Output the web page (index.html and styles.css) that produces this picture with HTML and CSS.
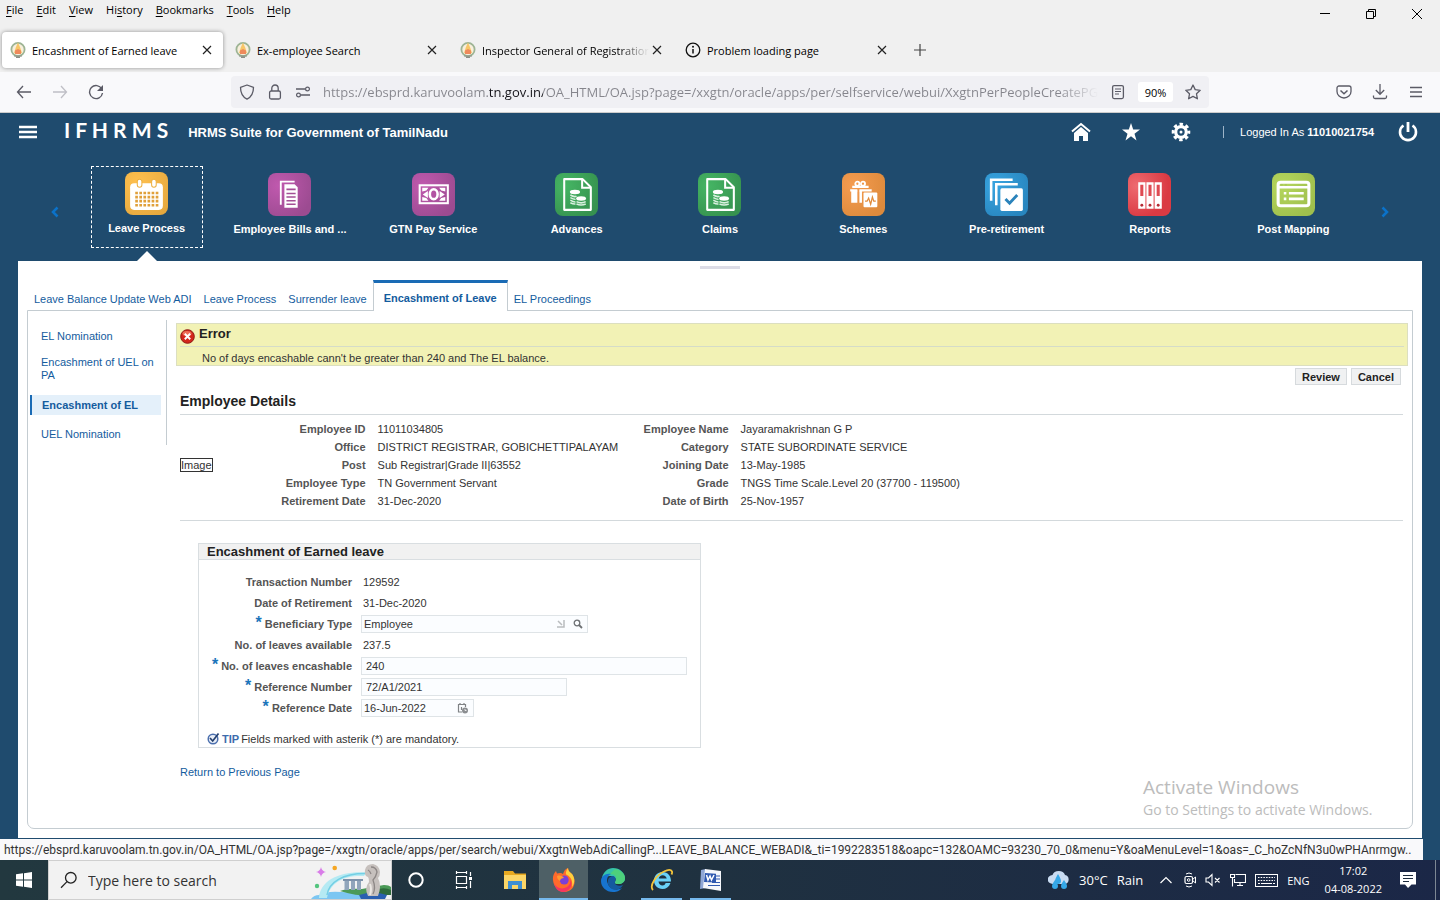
FILE: index.html
```html
<!DOCTYPE html>
<html lang="en">

<head>
    <meta charset="UTF-8">
    <meta name="viewport" content="width=device-width, initial-scale=1.0">
    <title>Encashment of Earned leave</title>
    <link rel="stylesheet" href="styles.css">
</head>

<body>

    <!-- shared symbols -->
    <svg class="defs" width="0" height="0">
        <symbol id="emblem" viewBox="0 0 16 16">
            <circle cx="8" cy="7.500" r="6.600" fill="#f8efdc" stroke="#9db494" stroke-width="1.800"/>
            <path d="M8 .5l2.200 5L12 11H4l1.800-5.500z" fill="#f7c667"/>
            <path d="M5 8.500l3-1.500 3 1.500V12H5z" fill="#ee8a5c"/>
            <path d="M4 14h8M6 15.300h4" stroke="#8b8f86" stroke-width="1.200"/>
        </symbol>
        <symbol id="close" viewBox="0 0 10 10">
            <path d="M1 1l8 8M9 1L1 9" stroke="#222" stroke-width="1.200" fill="none"/>
        </symbol>
        <symbol id="coinfile" viewBox="0 0 42 42">
            <path d="M9 6h18l8 8v22H9z" fill="none" stroke="#fff" stroke-width="2" stroke-linejoin="round"/>
            <path d="M26.500 6v8.500H35" fill="none" stroke="#fff" stroke-width="2"/>
            <ellipse cx="19.500" cy="18.500" rx="5" ry="2.200" fill="#fff"/>
            <path d="M15 21.500q4 2.500 6 1M15 24q4 2 5 1.500M15 26.500q3 2 5 1.800M15 29q3 1.500 5 1.200" stroke="#d9f0df" stroke-width="1.500" fill="none"/>
            <ellipse cx="25.500" cy="24.800" rx="4.800" ry="2.200" fill="#fff"/>
            <path d="M21 28q4.500 2.400 9 0M21 30.300q4.500 2 9 0" stroke="#d9f0df" stroke-width="1.500" fill="none"/>
        </symbol>
    </svg>

    <header class="browser">
        <div class="menubar">
            <nav class="menus">
                <button><u>F</u>ile</button>
                <button><u>E</u>dit</button>
                <button><u>V</u>iew</button>
                <button>Hi<u>s</u>tory</button>
                <button><u>B</u>ookmarks</button>
                <button><u>T</u>ools</button>
                <button><u>H</u>elp</button>
            </nav>
            <div class="window-buttons">
                <button aria-label="Minimize"><svg width="12" height="12" viewBox="0 0 12 12"><path d="M1 5.500h10" stroke="#000"/></svg></button>
                <button aria-label="Restore"><svg width="12" height="12" viewBox="0 0 12 12"><path d="M1.500 3.500h7v7h-7zM3.500 3V1.500h7v7H9" fill="none" stroke="#000"/></svg></button>
                <button aria-label="Close"><svg width="12" height="12" viewBox="0 0 12 12"><path d="M1 1l10 10M11 1L1 11" stroke="#000"/></svg></button>
            </div>
        </div>

        <div class="tabs">
            <div class="tab tab-active">
                <svg width="16" height="16"><use href="#emblem"/></svg>
                <span class="tab-title">Encashment of Earned leave</span>
                <button aria-label="Close tab"><svg width="10" height="10"><use href="#close"/></svg></button>
            </div>
            <div class="tab">
                <svg width="16" height="16"><use href="#emblem"/></svg>
                <span class="tab-title">Ex-employee Search</span>
                <button aria-label="Close tab"><svg width="10" height="10"><use href="#close"/></svg></button>
            </div>
            <div class="tab">
                <svg width="16" height="16"><use href="#emblem"/></svg>
                <span class="tab-title fade">Inspector General of Registration</span>
                <button aria-label="Close tab"><svg width="10" height="10"><use href="#close"/></svg></button>
            </div>
            <div class="tab">
                <svg width="16" height="16" viewBox="0 0 16 16"><circle cx="8" cy="8" r="6.800" fill="none" stroke="#111" stroke-width="1.300"/><path d="M8 7v4.500" stroke="#111" stroke-width="1.500"/><circle cx="8" cy="4.800" r="1" fill="#111"/></svg>
                <span class="tab-title">Problem loading page</span>
                <button aria-label="Close tab"><svg width="10" height="10"><use href="#close"/></svg></button>
            </div>
            <button class="new-tab" aria-label="New tab"><svg width="12" height="12" viewBox="0 0 12 12"><path d="M6 0v12M0 6h12" stroke="#444" stroke-width="1.200"/></svg></button>
        </div>

        <div class="toolbar">
            <button aria-label="Back"><svg width="16" height="16" viewBox="0 0 16 16"><path d="M15 8H1.500M7 2L1.500 8 7 14" fill="none" stroke="#5b5b66" stroke-width="1.300"/></svg></button>
            <button aria-label="Forward"><svg width="16" height="16" viewBox="0 0 16 16"><path d="M1 8h13.500M9 2l5.500 6L9 14" fill="none" stroke="#bfbfc6" stroke-width="1.300"/></svg></button>
            <button aria-label="Reload"><svg width="16" height="16" viewBox="0 0 16 16"><path d="M13.800 5A6.500 6.500 0 1 0 14.500 9" fill="none" stroke="#5b5b66" stroke-width="1.400"/><path d="M15 1v6H9z" fill="#5b5b66"/></svg></button>
            <div class="urlbar">
                <svg width="16" height="16" viewBox="0 0 16 16"><path d="M8 1l6.500 2.300C14.500 9 12.500 13 8 15.200 3.500 13 1.500 9 1.500 3.300z" fill="none" stroke="#5b5b66" stroke-width="1.300" stroke-linejoin="round"/></svg>
                <svg width="16" height="16" viewBox="0 0 16 16"><rect x="2.600" y="7" width="10.800" height="8" rx="1.500" fill="none" stroke="#5b5b66" stroke-width="1.300"/><path d="M4.800 7V4.200a3.200 3.200 0 0 1 6.400 0V7" fill="none" stroke="#5b5b66" stroke-width="1.300"/></svg>
                <svg width="16" height="16" viewBox="0 0 16 16"><path d="M1 5h9M6 11h9" stroke="#5b5b66" stroke-width="1.300"/><circle cx="12.500" cy="5" r="1.900" fill="none" stroke="#5b5b66" stroke-width="1.200"/><circle cx="3.500" cy="11" r="1.900" fill="none" stroke="#5b5b66" stroke-width="1.200"/></svg>
                <input class="url" type="text" aria-label="Address" value="https://ebsprd.karuvoolam.tn.gov.in/OA_HTML/OA.jsp?page=/xxgtn/oracle/apps/per/selfservice/webui/XxgtnPerPeopleCreatePG&amp;_ri=800">
                <button aria-label="Reader view"><svg width="16" height="16" viewBox="0 0 16 16"><rect x="2.600" y="1.600" width="10.800" height="13" rx="1.500" fill="none" stroke="#5b5b66" stroke-width="1.300"/><path d="M5 5h6M5 7.500h6M5 10h4" stroke="#5b5b66" stroke-width="1.200"/></svg></button>
                <button class="zoom">90%</button>
                <button aria-label="Bookmark"><svg width="16" height="16" viewBox="0 0 16 16"><path d="M8 1l2.200 4.600 5 .7-3.700 3.500.9 5L8 12.400l-4.400 2.400.9-5L.8 6.300l5-.7z" fill="none" stroke="#5b5b66" stroke-width="1.300" stroke-linejoin="round"/></svg></button>
            </div>
            <div class="toolbar-end">
                <button aria-label="Pocket"><svg width="16" height="16" viewBox="0 0 16 16"><path d="M3 2h10a2 2 0 0 1 2 2v3.500a7 6.500 0 0 1-14 0V4a2 2 0 0 1 2-2z" fill="none" stroke="#5b5b66" stroke-width="1.300"/><path d="M4.500 6.500L8 9.800l3.500-3.300" fill="none" stroke="#5b5b66" stroke-width="1.500"/></svg></button>
                <button aria-label="Downloads"><svg width="16" height="16" viewBox="0 0 16 16"><path d="M8 0v10M3.800 6L8 10.300 12.200 6M1.500 11.500V13a1.500 1.500 0 0 0 1.500 1.500h10a1.500 1.500 0 0 0 1.500-1.500v-1.500" fill="none" stroke="#5b5b66" stroke-width="1.300"/></svg></button>
                <button aria-label="Menu"><svg width="16" height="16" viewBox="0 0 16 16"><path d="M2 3.500h12M2 8h12M2 12.500h12" stroke="#5b5b66" stroke-width="1.300"/></svg></button>
            </div>
        </div>
    </header>

    <main class="page">
        <div class="app-header">
            <button aria-label="Navigator"><svg width="18" height="14" viewBox="0 0 18 14"><path d="M0 2h18M0 7h18M0 12h18" stroke="#fff" stroke-width="2.600"/></svg></button>
            <span class="logo">I F H R M S</span>
            <span class="suite">HRMS Suite for Government of TamilNadu</span>
            <div class="app-icons">
                <button aria-label="Home"><svg width="20" height="20" viewBox="0 0 20 20"><path d="M1 9.500L10 2l9 7.500" fill="none" stroke="#fff" stroke-width="2"/><path d="M3 11l7-6 7 6v8h-5v-5H8v5H3z" fill="#fff"/></svg></button>
                <button aria-label="Favorites"><svg width="20" height="20" viewBox="0 0 20 20"><path d="M10 1l2.200 6.500H19l-5.500 4.200 2 6.800L10 14.300l-5.500 4.200 2-6.800L1 7.500h6.800z" fill="#fff"/></svg></button>
                <button aria-label="Settings"><svg width="20" height="20" viewBox="0 0 20 20"><circle cx="10" cy="10" r="5.300" fill="none" stroke="#fff" stroke-width="3.200"/><circle cx="10" cy="10" r="7.800" fill="none" stroke="#fff" stroke-width="3" stroke-dasharray="3.400 2.726" stroke-dashoffset="1.700"/><circle cx="10" cy="10" r="1.500" fill="#fff"/></svg></button>
                <span class="divider"></span>
                <span class="user">Logged In As <b>11010021754</b></span>
                <button aria-label="Logout"><svg width="20" height="20" viewBox="0 0 20 20"><path d="M5.500 3.500a8 8 0 1 0 9 0" fill="none" stroke="#fff" stroke-width="2.600"/><path d="M10 0v10" stroke="#fff" stroke-width="2.800"/></svg></button>
            </div>
        </div>

        <nav class="springboard">
            <button class="arrow" aria-label="Previous"><svg width="8" height="12" viewBox="0 0 8 12"><path d="M6.500 1.500L2 6l4.500 4.500" fill="none" stroke="#0b72c9" stroke-width="2.500"/></svg></button>
            <ul class="tiles">
                <li class="tile tile-active"><a href="#">
                    <svg class="tile-icon orange" viewBox="0 0 42 42"><rect x="5" y="11" width="32" height="26" rx="4" fill="#fff"/><rect x="12" y="7" width="4.500" height="8" rx="2.200" fill="#fff" stroke="#edb041"/><rect x="26" y="7" width="4.500" height="8" rx="2.200" fill="#fff" stroke="#edb041"/><path d="M10 20.500h24M10 24.500h24M10 28.500h24M10 32.500h24" stroke="#e0a03a" stroke-width="2.600" stroke-dasharray="2.600 1.400"/></svg>
                    Leave Process</a></li>
                <li class="tile"><a href="#">
                    <svg class="tile-icon purple" viewBox="0 0 42 42"><path d="M12.500 31V8.500H26" fill="none" stroke="#fff" stroke-width="1.800"/><path d="M16 11h10l3 3v20H16z" fill="#fff"/><path d="M18 16h9M18 20h9M18 23.500h9M18 27h9M18 30.500h9" stroke="#a34f95" stroke-width="1.500"/></svg>
                    Employee Bills and ...</a></li>
                <li class="tile"><a href="#">
                    <svg class="tile-icon purple" viewBox="0 0 42 42"><rect x="7.500" y="12" width="27.500" height="17.500" fill="none" stroke="#fff" stroke-width="2"/><path d="M10 14.500h6l-2 2.500-4 1zM32.500 14.500h-6l2 2.500 4 1zM10 27h6l-2-2.500-4-1zM32.500 27h-6l2-2.500 4-1z" fill="#fff"/><path d="M10.500 21l5-3.500v7zM32 21l-5-3.500v7z" fill="#fff"/><ellipse cx="21.200" cy="20.700" rx="3.800" ry="4.800" fill="none" stroke="#fff" stroke-width="2.500"/></svg>
                    GTN Pay Service</a></li>
                <li class="tile"><a href="#">
                    <svg class="tile-icon green" viewBox="0 0 42 42"><use href="#coinfile"/></svg>
                    Advances</a></li>
                <li class="tile"><a href="#">
                    <svg class="tile-icon green" viewBox="0 0 42 42"><use href="#coinfile"/></svg>
                    Claims</a></li>
                <li class="tile"><a href="#">
                    <svg class="tile-icon amber" viewBox="0 0 42 42"><circle cx="15" cy="10.500" r="2" fill="none" stroke="#fff" stroke-width="1.800"/><circle cx="20.500" cy="10.500" r="2" fill="none" stroke="#fff" stroke-width="1.800"/><path d="M10 13.500h16M8 17h7M17 17h12" stroke="#fff" stroke-width="2.200"/><path d="M9 17h6v12H9zM17 17h2.500v12H17z" fill="#fff"/><rect x="21" y="19" width="13.500" height="14.500" rx="1" fill="#fff"/><path d="M22.500 27.500h2l1.500-3 2 6 1.700-7 1.300 4h2" fill="none" stroke="#e08a3a" stroke-width="1.200"/></svg>
                    Schemes</a></li>
                <li class="tile"><a href="#">
                    <svg class="tile-icon blue" viewBox="0 0 42 42"><path d="M6 27V6.500h21M11 31.500V11h21" fill="none" stroke="#fff" stroke-width="2.500"/><rect x="15" y="15" width="22" height="22" rx="1.500" fill="#fff"/><path d="M20 25.500l4 4 7.500-8" fill="none" stroke="#2a83bb" stroke-width="2.800"/></svg>
                    Pre-retirement</a></li>
                <li class="tile"><a href="#">
                    <svg class="tile-icon red" viewBox="0 0 42 42"><path d="M10 9h7v26h-7zM18 9h7v26h-7zM26 9h7v26h-7z" fill="#fff"/><path d="M12 11.500h3v11h-3zM20 11.500h3v11h-3zM28 11.500h3v11h-3z" fill="#df4a52"/><g fill="#b52c35"><circle cx="13.500" cy="31.500" r="1.400"/><circle cx="21.500" cy="31.500" r="1.400"/><circle cx="29.500" cy="31.500" r="1.400"/></g></svg>
                    Reports</a></li>
                <li class="tile"><a href="#">
                    <svg class="tile-icon lime" viewBox="0 0 42 42"><rect x="6" y="9" width="30" height="23" rx="2.500" fill="none" stroke="#fff" stroke-width="3"/><path d="M6 14h30" stroke="#fff" stroke-width="2.500"/><path d="M8.500 11.500h2M12.500 11.500h2" stroke="#a4c25a" stroke-width="1.200"/><path d="M11.500 19.800h2.500M11.500 25.300h2.500M16.500 19.800H31M16.500 25.300H31" stroke="#fff" stroke-width="2.600"/></svg>
                    Post Mapping</a></li>
            </ul>
            <button class="arrow" aria-label="Next"><svg width="8" height="12" viewBox="0 0 8 12"><path d="M1.500 1.500L6 6l-4.500 4.500" fill="none" stroke="#0b72c9" stroke-width="2.500"/></svg></button>
        </nav>

        <div class="sheet">
            <div class="handle"></div>
            <nav class="subtabs">
                <a href="#">Leave Balance Update Web ADI</a>
                <a href="#">Leave Process</a>
                <a href="#">Surrender leave</a>
                <a href="#" class="current">Encashment of Leave</a>
                <a href="#">EL Proceedings</a>
            </nav>

            <div class="content">
                <nav class="sidenav">
                    <a href="#">EL Nomination</a>
                    <a href="#">Encashment of UEL on PA</a>
                    <a href="#" class="current">Encashment of EL</a>
                    <a href="#">UEL Nomination</a>
                </nav>

                <div class="body">
                    <div class="error" role="alert">
                        <div class="error-title">
                            <svg width="15" height="15" viewBox="0 0 15 15"><circle cx="7.500" cy="7.500" r="6.800" fill="#d3261c" stroke="#8f1b14"/><ellipse cx="7" cy="4.500" rx="4.500" ry="2.500" fill="#ee6e58"/><path d="M4.800 4.800l5.400 5.400M10.200 4.800l-5.400 5.400" stroke="#fff" stroke-width="2"/></svg>
                            <span>Error</span>
                        </div>
                        <p>No of days encashable cann't be greater than 240 and The EL balance.</p>
                    </div>

                    <div class="actions">
                        <button>Review</button>
                        <button>Cancel</button>
                    </div>

                    <h2>Employee Details</h2>
                    <div class="employee">
                        <span class="photo">Image</span>
                        <dl class="left">
                            <dt>Employee ID</dt><dd>11011034805</dd>
                            <dt>Office</dt><dd>DISTRICT REGISTRAR, GOBICHETTIPALAYAM</dd>
                            <dt>Post</dt><dd>Sub Registrar|Grade II|63552</dd>
                            <dt>Employee Type</dt><dd>TN Government Servant</dd>
                            <dt>Retirement Date</dt><dd>31-Dec-2020</dd>
                        </dl>
                        <dl class="right">
                            <dt>Employee Name</dt><dd>Jayaramakrishnan G P</dd>
                            <dt>Category</dt><dd>STATE SUBORDINATE SERVICE</dd>
                            <dt>Joining Date</dt><dd>13-May-1985</dd>
                            <dt>Grade</dt><dd>TNGS Time Scale.Level 20 (37700 - 119500)</dd>
                            <dt>Date of Birth</dt><dd>25-Nov-1957</dd>
                        </dl>
                    </div>

                    <form class="panel">
                        <h3>Encashment of Earned leave</h3>
                        <div class="fields">
                            <span class="label">Transaction Number</span>
                            <span class="value">129592</span>

                            <span class="label">Date of Retirement</span>
                            <span class="value">31-Dec-2020</span>

                            <label for="beneficiary"><i>*</i> Beneficiary Type</label>
                            <div class="box lov">
                                <input type="text" id="beneficiary" value="Employee">
                                <svg width="8" height="8" viewBox="0 0 8 8"><path d="M1 1l4 4M7 0v7H0" fill="none" stroke="#b9bcbe" stroke-width="1.500"/></svg>
                                <button type="button" aria-label="Search"><svg width="10" height="10" viewBox="0 0 10 10"><circle cx="4" cy="4" r="2.800" fill="none" stroke="#6d7073" stroke-width="1.300"/><path d="M6 6l3 3" stroke="#6d7073" stroke-width="1.800"/></svg></button>
                            </div>

                            <span class="label">No. of leaves available</span>
                            <span class="value">237.5</span>

                            <label for="encashable"><i>*</i> No. of leaves encashable</label>
                            <input class="box wide" type="text" id="encashable" value="240">

                            <label for="refno"><i>*</i> Reference Number</label>
                            <input class="box medium" type="text" id="refno" value="72/A1/2021">

                            <label for="refdate"><i>*</i> Reference Date</label>
                            <div class="box date">
                                <input type="text" id="refdate" value="16-Jun-2022">
                                <button type="button" aria-label="Pick date"><svg width="12" height="12" viewBox="0 0 12 12"><path d="M5 10H1.500V2.500h7V5M3 1v2M7 1v2M4.500 5v3" fill="none" stroke="#808386" stroke-width="1.200"/><circle cx="8" cy="8.500" r="3" fill="#8b8e91"/><path d="M8 7v1.500h1.500" stroke="#fff" stroke-width=".8" fill="none"/></svg></button>
                            </div>
                        </div>
                        <p class="tip">
                            <svg width="13" height="13" viewBox="0 0 13 13"><circle cx="6" cy="7" r="4.800" fill="#e9eef7" stroke="#4b6fae" stroke-width="1.500"/><path d="M3 6l2.700 3L11.500 1.500" fill="none" stroke="#24406f" stroke-width="1.700"/></svg>
                            <b>TIP</b> Fields marked with asterik (*) are mandatory.
                        </p>
                    </form>

                    <a class="return" href="#">Return to Previous Page</a>
                </div>
            </div>
        </div>

        <div class="watermark">
            <p class="big">Activate Windows</p>
            <p>Go to Settings to activate Windows.</p>
        </div>
        <div class="status">https://ebsprd.karuvoolam.tn.gov.in/OA_HTML/OA.jsp?page=/xxgtn/oracle/apps/per/search/webui/XxgtnWebAdiCallingP...LEAVE_BALANCE_WEBADI&amp;_ti=1992283518&amp;oapc=132&amp;OAMC=93230_70_0&amp;menu=Y&amp;oaMenuLevel=1&amp;oas=_C_hoZcNfN3u0wPHAnrmgw..</div>
    </main>

    <footer class="taskbar">
        <button class="task" aria-label="Start"><svg width="16" height="16" viewBox="0 0 16 16"><path d="M0 2.300l7-1v6.200H0zM8 1.200L16 0v7.500H8zM0 8.500h7v6.200l-7-1zM8 8.500h8V16l-8-1.200z" fill="#fff"/></svg></button>
        <div class="search">
            <svg width="18" height="18" viewBox="0 0 18 18"><circle cx="10.800" cy="6.800" r="5.300" fill="none" stroke="#222" stroke-width="1.300"/><path d="M7 10.600L1 16.800" stroke="#222" stroke-width="1.300"/></svg>
            <input type="text" placeholder="Type here to search" aria-label="Type here to search">
            <!-- merlion and fountain -->
            <svg width="80" height="38" viewBox="0 0 80 38">
                <path d="M10 6q.8 4.200 5 5-4.200.8-5 5-.8-4.200-5-5 4.200-.8 5-5z" fill="#d97ce8"/>
                <circle cx="23.700" cy="7" r="2.300" fill="#f5a623"/>
                <circle cx="6" cy="25" r="2.200" fill="#53c57e"/>
                <path d="M0 38q3-4 8-4 7-4 22-3 12 0 20 4v3z" fill="#7cc6f2"/>
                <path d="M29 30q8-3 22-2 14-3 22-4 5 0 7 2v7q-26 5-51-3z" fill="#4b9a57"/>
                <path d="M62 30q10-5 18-1v5H62z" fill="#2f6b3c"/>
                <path d="M32 18h20v2H32z" fill="#7d92ab"/>
                <path d="M33.500 20h4.500v9h-4.500zM40 20h4v9h-4zM46 20h4v9h-4z" fill="#91a5bb"/>
                <path d="M8 37C9 20 28 10 55 11.500L53 15C32 14 19 22 16 37z" fill="#b5eaf3"/>
                <path d="M16 34C18 21 32 12.500 54 12.500" fill="none" stroke="#74cfe4" stroke-width="1.500"/>
                <path d="M48 34q14-5 28 0l-2 4H50z" fill="#2a5fb0"/>
                <path d="M54 9q1-6 8-6 6 1 7 8 0 4-2 6 4 8 0 18H57q-4-8 1-14 0-4-1-5-4-1-3-7z" fill="#c6c0bd"/>
                <path d="M60 6q5 0 6 5-1 5-4 8 3 8 0 14M57 9q2 1 3 4" fill="none" stroke="#8d8786" stroke-width="1.300"/>
                <path d="M59 23q2 5 0 11" fill="none" stroke="#ece8e4" stroke-width="2"/>
            </svg>
        </div>
        <button class="task" aria-label="Cortana"><svg width="18" height="18" viewBox="0 0 18 18"><circle cx="9" cy="9" r="6.700" fill="none" stroke="#fff" stroke-width="2"/></svg></button>
        <button class="task" aria-label="Task View"><svg width="18" height="18" viewBox="0 0 18 18"><path d="M1 1.500h11M1 16.500h11M1.500 5.500h10v7h-10zM1.500 0v3M11.500 0v3M1.500 15v3M11.500 15v3M15.500 1v4M15.500 10v7" fill="none" stroke="#fff" stroke-width="1.200"/><path d="M14 6h3v3h-3z" fill="#fff"/></svg></button>
        <div class="apps">
            <button aria-label="File Explorer"><svg width="24" height="24" viewBox="0 0 24 24"><path d="M1 3h9l2 2.500h11V21H1z" fill="#e8a920"/><path d="M1 7h22v14H1z" fill="#fcd667"/><path d="M5 21v-8h14v8h-4v-4H9v4z" fill="#3f8fd2"/></svg></button>
            <button class="open focused" aria-label="Firefox"><svg width="24" height="24" viewBox="0 0 24 24"><path d="M1 12C.5 8 2 5 4 3l1 2.500L8 5c1 0 2.500.5 3 1 1-3 2-5 5-6 0 3 2 4 4 6 5 6 3 18-8 18C6 24 1.500 18 1 12z" fill="#ff6a2b"/><path d="M16 0c0 3 2 4 4 6 3 4 3 9 0 13 1-6-1-10-5-12-2-1-1-4 1-7z" fill="#ffd03d"/><path d="M2 15c2 5 8 7 13 4 3-2 4-5 3-8 4 6-1 13-7 13-5 0-8-4-9-9z" fill="#f53660"/><circle cx="12.200" cy="12" r="4.500" fill="#7b3fd8"/><path d="M5 8c3-1 6 0 7 2-2 0-4 1-4 3-2-1-3-3-3-5z" fill="#ff9a30"/></svg></button>
            <button aria-label="Edge"><svg width="24" height="24" viewBox="0 0 24 24"><path d="M1 10C2 4 7 0 12 0c7 0 12 5 12 10 0 4-3 6-7 6-3 0-4-1-3-2 2-3 0-6-4-6-4 0-8 1-9 5z" fill="#35c2ab"/><path d="M14 1c6 1 10 5 10 9 0 4-3 6-7 6-3 0-4-1-3-2 3-5 0-8-5-8z" fill="#4dd07c"/><path d="M0 13c0-5 5-8 10-7-4 2-5 6-3 10 2 5 8 7 14 4-3 4-7 4-9 4C5 24 0 19 0 13z" fill="#1774cf"/><path d="M7 12c1-3 3-4 5-4 3 1 3 4 2 6-1 3 5 5 8 3-3 6-12 7-15-1z" fill="#155a9f"/><path d="M13 12c0 5 4 5 8 4-3 1-8 2-8-4z" fill="#21323e"/></svg></button>
            <button class="open" aria-label="Internet Explorer"><svg width="24" height="24" viewBox="0 0 24 24"><path d="M20.500 15c-1.500 4-4.500 6-8 6-5 0-8.500-4-8.500-8.500C4 8 7.500 4 12.500 4c5.500 0 8.500 4 8.500 9.500H8.500c.3 2.500 2 4 4 4 1.500 0 2.500-.8 3.200-2.500zM8.700 10.500h8c-.3-2-2-3.300-4-3.300s-3.600 1.300-4 3.300z" fill="#6ad2f7"/><path d="M3 22C-1 18 6 7 14 3.500c4-2 7-2 8 0 .4 1 0 2-.5 3" fill="none" stroke="#f3c43b" stroke-width="1.800"/></svg></button>
            <button class="open" aria-label="Word"><svg width="24" height="24" viewBox="0 0 24 24"><path d="M2 2l5-1v19l-6 1z" fill="#8fa7d6"/><path d="M6 1l16 2v20L4 20z" fill="#f5f7fb"/><path d="M6 5l11 .8v8.700L5 14z" fill="#2f59b0"/><path d="M7.500 7l1.500 5 2-4 1.500 4 2.500-5" fill="none" stroke="#fff" stroke-width="1.500"/><path d="M17 8h4M17 11h4M13 14.500h8M9 17.500h12" stroke="#2f59b0" stroke-width="1.200"/></svg></button>
        </div>
        <div class="tray">
            <button class="weather">
                <svg width="22" height="20" viewBox="0 0 22 20"><path d="M5 14a5 4.500 0 0 1-.5-9A6.500 5.500 0 0 1 17 5a4.600 4.600 0 0 1 0 9z" fill="#c9dcf2"/><path d="M10 4q3 5 3 7a3 3 0 0 1-6 0q0-2 3-7zM7 10q3 4 3 6a3 3 0 0 1-6 0q0-2 3-6zM16 10q3 4 3 6a3 3 0 0 1-6 0q0-2 3-6z" fill="#35a8e8"/></svg>
                <span>30°C</span><span>Rain</span>
            </button>
            <button class="more" aria-label="Show hidden icons"><svg width="12" height="8" viewBox="0 0 12 8"><path d="M.5 7L6 1.500 11.500 7" fill="none" stroke="#fff" stroke-width="1.200"/></svg></button>
            <button aria-label="Meet Now"><svg width="12" height="16" viewBox="0 0 12 16"><path d="M2 2q3-2 6 0M2 14q3 2 6 0" fill="none" stroke="#fff"/><rect x="1" y="4.500" width="7.500" height="7" rx="1.500" fill="none" stroke="#fff" stroke-width="1.200"/><circle cx="4.700" cy="8" r="1.300" fill="none" stroke="#fff"/><path d="M8.500 7.500L11.500 5v6l-3-2.500" fill="none" stroke="#fff"/></svg></button>
            <button aria-label="Volume"><svg width="16" height="14" viewBox="0 0 16 14"><path d="M1 5h2.500L7 1.500v11L3.500 9H1zM10 5l4.500 4.500M14.500 5L10 9.500" fill="none" stroke="#fff" stroke-width="1.100"/></svg></button>
            <button aria-label="Network"><svg width="16" height="14" viewBox="0 0 16 14"><path d="M5.500 1.500h10v8h-11V6M7 12.500h6M10 9.500v3M.5 1.500h4v3h-4zM2.500 5v8.500" fill="none" stroke="#fff" stroke-width="1.100"/></svg></button>
            <button aria-label="Touch keyboard"><svg width="23" height="13" viewBox="0 0 23 13"><rect x=".5" y=".5" width="22" height="12" fill="none" stroke="#fff"/><path d="M3 3.500h17M3 6.500h17" stroke="#fff" stroke-dasharray="1.500 1.200"/><path d="M3 9.500h2M6 9.500h11M18 9.500h2" stroke="#fff"/></svg></button>
            <button class="lang">ENG</button>
            <button class="clock"><span>17:02</span><span>04-08-2022</span></button>
            <button class="notes" aria-label="Notifications"><svg width="16" height="16" viewBox="0 0 16 16"><path d="M0 0h16v12.500h-4.500L8 16l-3-3.500H0z" fill="#fff"/><path d="M3 3.500h10M3 6.500h10M3 9.500h6" stroke="#1c2b3d"/></svg></button>
            <button class="desktop" aria-label="Show desktop"></button>
        </div>
    </footer>

</body>

</html>
```
FILE: styles.css
```css
* {
    box-sizing: border-box;
}

body {
    margin: 0;
    height: 100vh;
    display: flex;
    flex-direction: column;
    overflow: hidden;
    font-family: "Liberation Sans", Arial, sans-serif;
    font-size: 11px;
    color: #333;
}

button {
    display: flex;
    align-items: center;
    justify-content: center;
    padding: 0;
    border: none;
    background: none;
    font: inherit;
    color: inherit;
    cursor: pointer;
}

input {
    min-width: 0;
    padding: 0;
    border: none;
    outline: none;
    background: none;
    font: inherit;
    color: inherit;
}

a {
    color: #145c9e;
    text-decoration: none;
}

p,
h2,
h3,
dl,
dd,
ul {
    margin: 0;
    padding: 0;
}

svg {
    flex: none;
}

.defs {
    position: absolute;
}

/* browser window */
.browser {
    background: #f0f0f0;
    font-family: "Open Sans", "Noto Sans", sans-serif;
    font-size: 12px;
    color: #000;
}

.menubar {
    display: flex;
    justify-content: space-between;
    height: 28px;
}

.menus {
    display: flex;
    align-items: flex-start;
    gap: 13px;
    padding: 2px 6px;
    font-size: 11px;
}

.menus u {
    text-underline-offset: 2px;
}

.window-buttons {
    display: flex;
}

.window-buttons button {
    width: 46px;
}

.tabs {
    display: flex;
    align-items: center;
    height: 44px;
    padding: 0 2px;
    gap: 4px;
}

.tab {
    display: flex;
    align-items: center;
    width: 221px;
    height: 36px;
    padding: 0 8px;
    border-radius: 4px;
}

.tab-active {
    background: #fff;
    box-shadow: 0 0 4px rgba(0, 0, 0, 0.4);
}

.tab-title {
    flex: 1;
    min-width: 0;
    margin-left: 6px;
    overflow: hidden;
    white-space: nowrap;
    font-size: 11px;
}

.fade {
    mask-image: linear-gradient(to left, transparent, #000 30px);
}

.tab button {
    width: 16px;
    height: 16px;
}

.new-tab {
    width: 36px;
    height: 36px;
}

.toolbar {
    display: flex;
    align-items: center;
    height: 41px;
    padding: 0 6px;
    background: #f9f9fb;
    border-bottom: 1px solid #ccc;
}

.toolbar > button,
.toolbar-end button {
    width: 36px;
    height: 32px;
}

.urlbar {
    flex: 1;
    display: flex;
    align-items: center;
    gap: 12px;
    height: 32px;
    margin: 0 117px;
    padding: 0 8px;
    border-radius: 4px;
    background: #f0f0f4;
}

/* host name is drawn darker than the rest of the address */
.url {
    flex: 1;
    color: #85858c;
    font-size: 13px;
    background: linear-gradient(to right, #85858c 166px, #15141a 166px, #15141a 220px, #85858c 220px, #85858c calc(100% - 40px), transparent);
    background-clip: text;
    -webkit-background-clip: text;
    -webkit-text-fill-color: transparent;
}

.zoom {
    width: 35px;
    height: 20px;
    border-radius: 3px;
    background: #fff;
    font-size: 11px;
}

.toolbar-end {
    display: flex;
}

/* application */
.page {
    flex: 1;
    min-height: 0;
    position: relative;
    display: flex;
    flex-direction: column;
    padding: 0 18px 22px;
    background: #1f4b6e;
}

.app-header {
    display: flex;
    align-items: center;
    height: 38px;
    color: #fff;
}

.app-header > button {
    width: 20px;
}

.logo {
    margin-left: 26px;
    padding-bottom: 6px;
    font-family: Lato, sans-serif;
    font-size: 21px;
    font-weight: bold;
}

.suite {
    margin-left: 20px;
    font-size: 13px;
    font-weight: bold;
}

.app-icons {
    flex: 1;
    display: flex;
    align-items: center;
    justify-content: flex-end;
    gap: 30px;
    padding-right: 4px;
}

.app-icons .divider {
    width: 1px;
    height: 12px;
    margin-left: 2px;
    background: #9db4c8;
}

.app-icons .user {
    margin: 0 -6px 0 -14px;
}

.springboard {
    display: flex;
    align-items: flex-start;
    height: 110px;
    padding: 14px 17px 0;
}

.arrow {
    width: 40px;
    height: 94px;
}

.tiles {
    flex: 1;
    display: grid;
    grid-template-columns: repeat(9, 1fr);
    list-style: none;
}

.tile {
    display: flex;
    justify-content: center;
}

.tile a {
    display: flex;
    flex-direction: column;
    align-items: center;
    gap: 7px;
    width: 120px;
    height: 84px;
    padding-top: 8px;
    color: #fff;
    font-weight: bold;
    white-space: nowrap;
}

.tile-active {
    position: relative;
}

.tile-active a {
    width: 112px;
    height: 82px;
    margin-top: 1px;
    padding-top: 5px;
    border: 1px dashed #fff;
}

/* pointer to the sheet below */
.tile-active::after {
    content: "";
    position: absolute;
    top: 86px;
    border: 10px solid transparent;
    border-top: none;
    border-bottom-color: #fff;
}

.tile-icon {
    width: 43px;
    height: 43px;
    border-radius: 8px;
}

.orange { background: radial-gradient(circle at 30% 25%, #ffc04e, #e2a53c); }
.purple { background: radial-gradient(circle at 25% 30%, #c059ae, #9c4b91 80%); }
.green { background: radial-gradient(circle at 25% 30%, #45b564, #36924f 80%); }
.amber { background: radial-gradient(circle at 25% 30%, #f59c50, #dd8a3c 80%); }
.blue { background: radial-gradient(circle at 25% 30%, #38a4e0, #2886bf 80%); }
.red { background: radial-gradient(circle at 20% 30%, #ee6b70, #da3a43 70%); }
.lime { background: radial-gradient(circle at 25% 30%, #b5d65d, #9fbf4d 80%); }

.sheet {
    flex: 1;
    display: flex;
    flex-direction: column;
    padding: 0 9px 9px;
    background: #fff;
}

.handle {
    flex: none;
    align-self: center;
    width: 40px;
    height: 3px;
    margin-top: 5px;
    background: #dcdce6;
}

.subtabs {
    display: flex;
    align-items: flex-end;
    margin: 11px 0 -1px;
    padding-left: 1px;
    z-index: 1;
}

.subtabs a {
    padding: 0 6px;
    line-height: 24px;
}

.subtabs .current {
    padding: 3px 10px 0;
    border: 1px solid #c4ccd1;
    border-top: 3px solid #1a6bb5;
    border-bottom: none;
    background: #fff;
    line-height: 25px;
    font-weight: bold;
}

.content {
    flex: 1;
    display: flex;
    align-items: flex-start;
    padding: 9px 4px 0 2px;
    border: 1px solid #c4ccd1;
    border-radius: 0 0 7px 7px;
}

.sidenav {
    display: flex;
    flex-direction: column;
    gap: 13px;
    width: 137px;
    height: 125px;
    padding: 10px 5px 0 0;
    border-right: 1px solid #c4ccd1;
    line-height: 13px;
}

.sidenav a {
    padding-left: 11px;
}

.sidenav .current {
    padding: 4px 0 3px 10px;
    border-left: 2px solid #1a6bb5;
    background: #e4f0fa;
    font-weight: bold;
}

.body {
    flex: 1;
    padding: 3px 0 0 9px;
}

.error {
    height: 43px;
    padding: 0 3px;
    border: 1px solid #dcdfc0;
    background: #f2f2b5;
}

.error-title {
    display: flex;
    align-items: flex-end;
    gap: 4px;
    height: 23px;
    padding-bottom: 2px;
    border-bottom: 1px solid #d5dcc8;
    color: #222;
    font-size: 13px;
    line-height: 20px;
    font-weight: bold;
}

.error p {
    padding-left: 22px;
    line-height: 22px;
}

.actions {
    display: flex;
    justify-content: flex-end;
    gap: 4px;
    padding: 2px 7px 0 0;
}

.actions button {
    height: 17px;
    padding: 0 6px;
    border: 1px solid #d6dadd;
    background: #f0f1f2;
    color: #222;
    font-weight: bold;
}

h2 {
    margin: 4px 5px 0 4px;
    border-bottom: 1px solid #d3d9dc;
    color: #222;
    font-size: 14px;
    line-height: 25px;
}

.employee {
    display: flex;
    align-items: center;
    height: 106px;
    margin: 0 5px 0 4px;
    padding-bottom: 6px;
    border-bottom: 1px solid #d3d9dc;
}

.photo {
    border: 1px solid #333;
    line-height: 12px;
}

.employee dl {
    display: grid;
    column-gap: 12px;
    line-height: 18px;
    white-space: nowrap;
}

.employee .left {
    grid-template-columns: 153px 250px;
}

.employee .right {
    grid-template-columns: 101px auto;
}

dt,
.label,
.fields label {
    color: #555;
    font-weight: bold;
    text-align: right;
}

.panel {
    width: 503px;
    height: 205px;
    margin: 22px 0 0 22px;
    border: 1px solid #d9dee1;
}

h3 {
    padding-left: 8px;
    border-bottom: 1px solid #d9dee1;
    background: #f1f1f1;
    color: #222;
    font-size: 13px;
    line-height: 15px;
}

.fields {
    display: grid;
    grid-template-columns: 153px auto;
    grid-auto-rows: 21px;
    column-gap: 9px;
    align-items: center;
    padding-top: 11px;
}

.fields i {
    color: #1b75bb;
    font-size: 16px;
    font-style: normal;
    line-height: 10px;
}

.value {
    padding-left: 2px;
}

.box {
    height: 18px;
    padding: 0 4px;
    border: 1px solid #dfe4e7;
    background: #fbfdff;
}

.lov,
.date {
    display: flex;
    align-items: center;
    padding: 0 4px 0 2px;
}

.lov input,
.date input {
    flex: 1;
}

.lov {
    width: 227px;
    gap: 8px;
}

.wide {
    width: 326px;
}

.medium {
    width: 206px;
}

.date {
    width: 113px;
}

.tip {
    display: flex;
    align-items: center;
    gap: 2px;
    padding: 14px 0 0 8px;
}

.tip b {
    color: #3d6cac;
}

.return {
    display: block;
    margin: 18px 0 0 4px;
}

.watermark {
    position: absolute;
    right: 61px;
    bottom: 39px;
    min-width: 236px;
    font-family: "Open Sans", sans-serif;
    font-size: 14px;
    line-height: 22px;
    color: #bcbcbc;
}

.watermark .big {
    font-size: 19px;
    line-height: 24px;
}

.status {
    position: absolute;
    left: 0;
    bottom: 0;
    width: calc(100% - 17px);
    height: 21px;
    padding: 0 4px;
    overflow: hidden;
    background: #f9f9fb;
    font-family: Roboto, sans-serif;
    font-size: 12px;
    line-height: 22px;
    white-space: nowrap;
}

/* windows taskbar */
.taskbar {
    display: flex;
    height: 40px;
    background: linear-gradient(to right, #22383f, #1f3140 50%, #1b2747);
    color: #fff;
    font-family: "Open Sans", sans-serif;
    font-size: 12px;
}

.task {
    width: 48px;
}

.search {
    display: flex;
    align-items: center;
    gap: 10px;
    width: 344px;
    padding-left: 11px;
    border: 1px solid #cfcfcf;
    background: #f2f2f2;
    color: #333;
    font-size: 14px;
}

.search input {
    flex: 1;
}

.search input::placeholder {
    color: #333;
}

.apps {
    display: flex;
    margin-left: 2px;
}

.apps button {
    position: relative;
    width: 49px;
}

.apps .open::after {
    content: "";
    position: absolute;
    left: 4px;
    right: 4px;
    bottom: 0;
    height: 2px;
    background: #76b9ed;
}

.apps .focused {
    background: #4e6066;
}

.apps .focused::after {
    left: 0;
    right: 0;
}

.tray {
    flex: 1;
    display: flex;
    align-items: center;
    justify-content: flex-end;
    gap: 9px;
    padding-right: 4px;
}

.weather {
    gap: 9px;
    margin-right: 8px;
    font-size: 13px;
}

.more {
    margin-right: 3px;
}

.clock {
    flex-direction: column;
    margin: 0 9px 0 2px;
    font-size: 11px;
    line-height: 18px;
}

.lang {
    margin-right: 4px;
    font-size: 11px;
}

.desktop {
    width: 1px;
    height: 40px;
    margin-left: 10px;
    background: #7d8794;
}
```
